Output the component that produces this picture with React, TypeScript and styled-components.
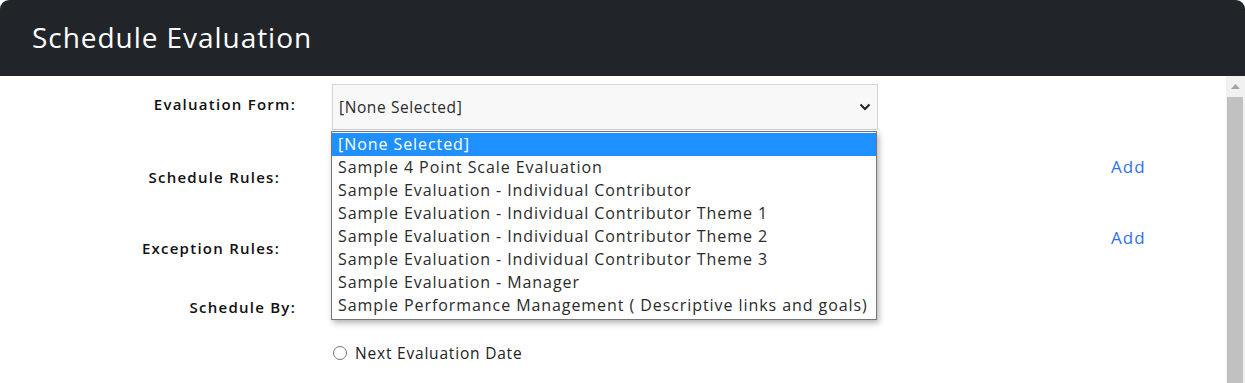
import React from "react";
import styled, { createGlobalStyle } from "styled-components";

const options = [
    "[None Selected]",
    "Sample 4 Point Scale Evaluation",
    "Sample Evaluation - Individual Contributor",
    "Sample Evaluation - Individual Contributor Theme 1",
    "Sample Evaluation - Individual Contributor Theme 2",
    "Sample Evaluation - Individual Contributor Theme 3",
    "Sample Evaluation - Manager",
    "Sample Performance Management ( Descriptive links and goals)",
];

const GlobalStyle = createGlobalStyle`
    html, body {
        margin: 0;
        padding: 0;
        background: #ffffff;
        font-family: "Open Sans", "Noto Sans", sans-serif;
        color: #212529;
    }
`;

const App = () => {
    return (
        <>
            <GlobalStyle />
            <Modal>
                <Header>
                    <Title>Schedule Evaluation</Title>
                </Header>
                <Body>
                    <Content>
                        <Row height={46} top={8}>
                            <Label pad={10}>Evaluation Form:</Label>
                            <Control>
                                <SelectBox>
                                    <span>[None Selected]</span>
                                    <svg width="12" height="8" viewBox="0 0 12 8">
                                        <path d="M1.5 1.5 L6 6 L10.5 1.5" fill="none" stroke="#222" strokeWidth="2" />
                                    </svg>
                                </SelectBox>
                                <Dropdown>
                                    {options.map((opt, i) => (
                                        <Option key={opt} active={i === 0}>{opt}</Option>
                                    ))}
                                </Dropdown>
                            </Control>
                        </Row>
                        <Row height={71}>
                            <Label pad={37} inset={16}>Schedule Rules:</Label>
                            <Control />
                            <AddLink pad={26}>Add</AddLink>
                        </Row>
                        <Row height={71}>
                            <Label pad={37} inset={16}>Exception Rules:</Label>
                            <Control />
                            <AddLink pad={26}>Add</AddLink>
                        </Row>
                        <Row height={60}>
                            <Label pad={25}>Schedule By:</Label>
                            <Control />
                        </Row>
                        <Row height={40}>
                            <Label pad={0} />
                            <RadioLine>
                                <Radio />
                                <span>Next Evaluation Date</span>
                            </RadioLine>
                        </Row>
                    </Content>
                    <Scrollbar>
                        <ScrollArrow>
                            <svg width="9" height="5" viewBox="0 0 9 5">
                                <path d="M0 5 L4.5 0 L9 5 Z" fill="#a3a3a3" />
                            </svg>
                        </ScrollArrow>
                        <Thumb />
                    </Scrollbar>
                </Body>
            </Modal>
        </>
    );
};

const Modal = styled.div`
    width: 1245px;
    height: 383px;
    display: flex;
    flex-direction: column;
    overflow: hidden;
`;

const Header = styled.div`
    height: 76px;
    flex-shrink: 0;
    display: flex;
    align-items: center;
    padding-left: 32px;
    background-color: #212529;
    border-radius: 9px 9px 0 0;
`;

const Title = styled.h1`
    margin: 0;
    margin-top: -2px;
    font-size: 28px;
    font-weight: 400;
    color: #ffffff;
    letter-spacing: 0.95px;
`;

const Body = styled.div`
    flex: 1;
    display: flex;
    min-height: 0;
`;

const Content = styled.div`
    flex: 1;
    display: flex;
    flex-direction: column;
`;

const Row = styled.div<{ height: number; top?: number }>`
    display: flex;
    align-items: flex-start;
    height: ${p => p.height}px;
    margin-top: ${p => p.top || 0}px;
    flex-shrink: 0;
`;

const Label = styled.div<{ pad: number; inset?: number }>`
    width: 296px;
    box-sizing: border-box;
    padding-top: ${p => p.pad}px;
    padding-right: ${p => p.inset || 0}px;
    text-align: right;
    font-size: 15px;
    font-weight: 600;
    line-height: 20px;
    letter-spacing: 1.25px;
    color: #111;
`;

const Control = styled.div`
    position: relative;
    width: 546px;
    margin-left: 36px;
    height: 100%;
`;

const SelectBox = styled.div`
    height: 100%;
    box-sizing: border-box;
    display: flex;
    align-items: center;
    justify-content: space-between;
    padding: 0 6px 0 6px;
    background: #f8f8f8;
    border: 1px solid #d4d4d4;
    font-size: 15.5px;
    letter-spacing: 0.6px;
    color: #2a2a2a;
`;

const Dropdown = styled.div`
    position: absolute;
    top: 47px;
    left: -1px;
    width: 546px;
    box-sizing: border-box;
    border: 1px solid #767676;
    background: #ffffff;
    box-shadow: 2px 3px 6px rgba(0, 0, 0, 0.3);
    padding: 1px 0 2px;
    z-index: 5;
`;

const Option = styled.div<{ active?: boolean }>`
    height: 23px;
    line-height: 22px;
    padding-left: 6px;
    font-size: 16px;
    letter-spacing: 0.93px;
    white-space: nowrap;
    background: ${p => (p.active ? "#1e90ff" : "transparent")};
    color: ${p => (p.active ? "#ffffff" : "#2a2a2a")};
`;

const AddLink = styled.a<{ pad: number }>`
    margin-left: 233px;
    padding-top: ${p => p.pad}px;
    font-size: 17px;
    line-height: 22px;
    letter-spacing: 1px;
    color: #2f72e6;
    cursor: pointer;
`;

const RadioLine = styled.label`
    display: flex;
    align-items: center;
    gap: 8px;
    margin-left: 37px;
    padding-top: 10px;
    font-size: 15.5px;
    letter-spacing: 0.8px;
    color: #222;
`;

const Radio = styled.span`
    width: 12px;
    height: 12px;
    border: 1px solid #767676;
    border-radius: 50%;
    background: #fff;
`;

const Scrollbar = styled.div`
    width: 19px;
    flex-shrink: 0;
    display: flex;
    flex-direction: column;
    background: #f1f1f1;
`;

const ScrollArrow = styled.div`
    height: 21px;
    display: flex;
    align-items: center;
    justify-content: center;
`;

const Thumb = styled.div`
    flex: 1;
    margin: 0 2px 0 1px;
    background: #c1c1c1;
`;

export default App;
